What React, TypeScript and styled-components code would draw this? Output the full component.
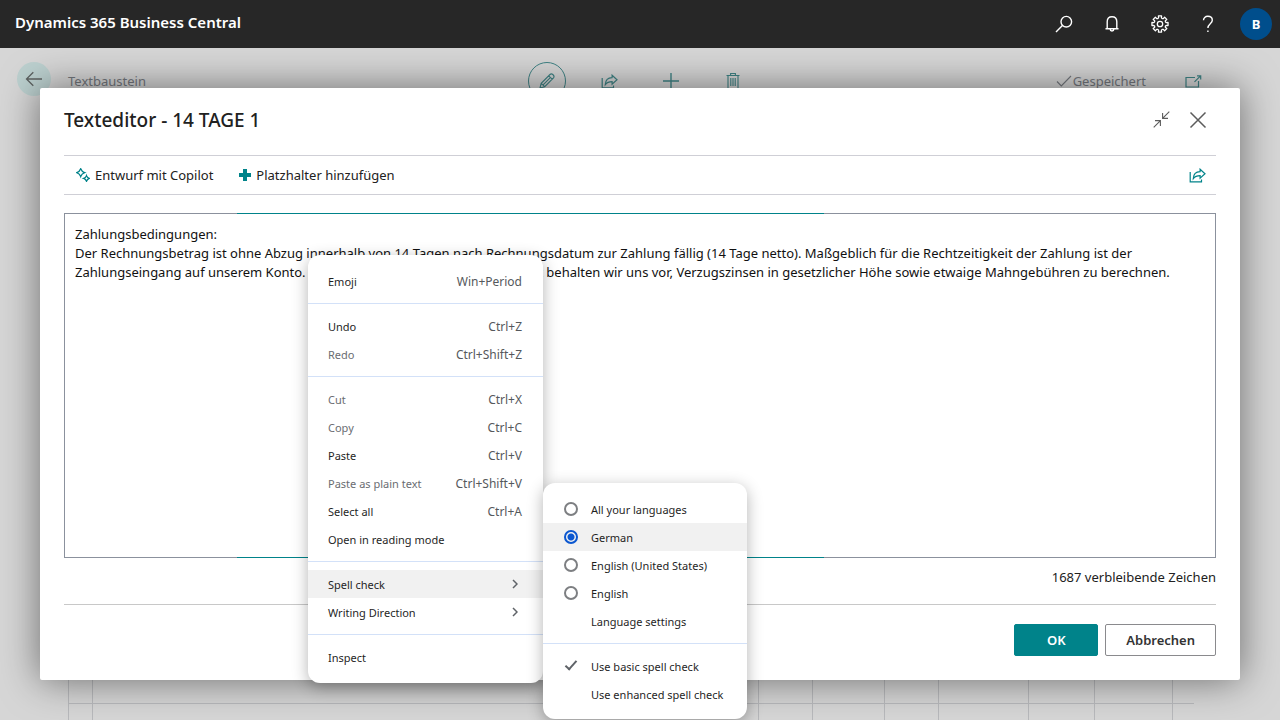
import React, { useState } from "react";
import styled, { createGlobalStyle } from "styled-components";

const teal = "#00838a";
const fadedTeal = "#3f8385";

const GlobalStyle = createGlobalStyle`
  *, *::before, *::after { box-sizing: border-box; }
  body {
    margin: 0;
    font-family: "Noto Sans", "Open Sans", sans-serif;
    font-size: 13px;
    color: #212121;
  }
  button {
    font: inherit;
    color: inherit;
    border: 0;
    padding: 0;
    background: none;
    cursor: pointer;
  }
  svg { display: block; fill: none; stroke: currentColor; }
`;

const Page = styled.div`
  position: relative;
  display: flex;
  flex-direction: column;
  min-height: 100vh;
  overflow: hidden;
  background: #d6d6d6;
`;

const TopBar = styled.header`
  display: flex;
  align-items: center;
  justify-content: space-between;
  height: 48px;
  padding: 0 8px 4px 15px;
  background: #272727;
  color: #fff;
`;

const Product = styled.a`
  color: #fff;
  font-size: 15px;
  line-height: 20px;
  font-weight: 600;
  text-decoration: none;
`;

const TopActions = styled.nav`
  display: flex;
  align-items: center;
  padding-top: 4px;
`;

const TopButton = styled.button`
  display: grid;
  place-items: center;
  width: 48px;
  height: 44px;
`;

const Avatar = styled.button`
  width: 32px;
  height: 32px;
  margin-left: 8px;
  border-radius: 50%;
  background: #004e8c;
  font-size: 13px;
  font-weight: 700;
`;

const RecordBar = styled.div`
  display: grid;
  grid-template-columns: 1fr auto 1fr;
  align-items: start;
  padding: 14px 17px 0;
  color: #74787e;
  line-height: 38px;
`;

const RecordStart = styled.div`
  display: flex;
  gap: 17px;
`;

const BackButton = styled.button`
  display: grid;
  place-items: center;
  width: 34px;
  height: 34px;
  border-radius: 50%;
  background: #bcd0cf;
  color: #5d6161;
`;

const RecordActions = styled.div`
  display: flex;
  gap: 24px;
`;

const RecordButton = styled.button<{ $ring?: boolean }>`
  display: grid;
  place-items: center;
  width: 38px;
  height: 38px;
  border-radius: 50%;
  border: ${(p) => (p.$ring ? `1px solid ${fadedTeal}` : "0")};
  color: ${fadedTeal};
`;

const RecordEnd = styled.div`
  display: flex;
  align-items: center;
  justify-content: flex-end;
  padding-right: 61px;
  gap: 39px;
`;

const SavedState = styled.span`
  display: flex;
  align-items: center;
  gap: 1px;
`;

const PopOut = styled.button`
  color: ${fadedTeal};
`;

const LineGrid = styled.div`
  display: grid;
  grid-template-columns: 24fr 666fr 54fr 72fr 54fr 90fr 66fr 78fr 22fr;
  grid-template-rows: 40px 17px;
  margin: auto 86px 0 68px;
`;

const LineCell = styled.div`
  border-left: 1px solid #b8b9bc;
  border-top: 1px solid #b8b9bc;
`;

const Overlay = styled.div`
  position: absolute;
  inset: 48px 0 0;
  display: flex;
  padding: 40px;
  overflow: hidden;
`;

const Dialog = styled.section`
  flex: 1;
  display: flex;
  flex-direction: column;
  min-width: 0;
  padding: 0 24px 24px;
  border-radius: 2px;
  background: #fff;
  box-shadow: 0 0 38px rgba(0, 0, 0, 0.5);
`;

const DialogHead = styled.div`
  display: flex;
  align-items: center;
  justify-content: space-between;
  height: 63px;
  margin-bottom: 4px;
`;

const Title = styled.h1`
  margin: 0;
  font-size: 19px;
  line-height: 28px;
  font-weight: 500;
`;

const WindowActions = styled.div`
  display: flex;
  align-items: center;
  gap: 19px;
  padding-right: 9px;
  color: #5c5c5c;
`;

const Toolbar = styled.div`
  display: flex;
  align-items: center;
  gap: 26px;
  padding: 0 10px 0 12px;
  height: 40px;
  border: solid #cfcfd6;
  border-width: 1px 0;
`;

const ToolButton = styled.button<{ $end?: boolean }>`
  display: flex;
  align-items: center;
  gap: 5px;
  margin-left: ${(p) => (p.$end ? "auto" : "0")};
  line-height: 38px;

  svg { color: ${teal}; }
`;

const Editor = styled.div`
  position: relative;
  flex: 1;
  display: flex;
  min-height: 160px;
  margin-top: 18px;

  &::before,
  &::after {
    content: "";
    position: absolute;
    left: 15%;
    width: 51%;
    height: 1px;
    background: ${teal};
  }
  &::before { top: 0; }
  &::after { bottom: 0; }
`;

const TextArea = styled.textarea`
  flex: 1;
  resize: none;
  padding: 11px 10px;
  border: 1px solid #8b919d;
  border-radius: 0;
  outline: 0;
  background: #fff;
  color: #111;
  font: inherit;
  line-height: 19px;
`;

const Counter = styled.div`
  padding-bottom: 8px;
  line-height: 38px;
  text-align: right;
`;

const DialogFoot = styled.div`
  display: flex;
  justify-content: flex-end;
  gap: 7px;
  padding-top: 19px;
  border-top: 1px solid #c8c8c8;
`;

const FootButton = styled.button<{ $primary?: boolean }>`
  min-width: 84px;
  height: 32px;
  padding: 0 20px;
  border: 1px solid ${(p) => (p.$primary ? teal : "#8a8a8d")};
  border-radius: 2px;
  background: ${(p) => (p.$primary ? teal : "#fff")};
  color: ${(p) => (p.$primary ? "#fff" : "#333")};
  font-weight: 600;
`;

const Menu = styled.div<{ $width: number; $sub?: boolean }>`
  position: absolute;
  left: ${(p) => (p.$sub ? "100%" : "308px")};
  top: ${(p) => (p.$sub ? "228px" : "207px")};
  width: ${(p) => p.$width}px;
  padding: ${(p) => (p.$sub ? "12px 0 11px" : "12px 0")};
  border-radius: 12px;
  background: #fff;
  box-shadow: 0 4px 16px rgba(0, 0, 0, 0.3);
  font-size: 11px;
  color: #1f1f1f;
`;

const MenuItem = styled.button<{ $active?: boolean }>`
  display: flex;
  align-items: center;
  justify-content: space-between;
  width: 100%;
  height: 28px;
  padding: 0 21px 0 20px;
  background: ${(p) => (p.$active ? "#f1f1f1" : "none")};

  &:disabled { color: #6a6d72; }
  svg { margin-right: 4px; color: #5f6368; }
`;

const Shortcut = styled.span`
  color: #55585c;
  font-size: 12px;
`;

const Separator = styled.hr`
  height: 1px;
  margin: 8px 0;
  border: 0;
  background: #d3e1f8;
`;

const Choice = styled.label<{ $active?: boolean }>`
  display: flex;
  align-items: center;
  gap: 13px;
  height: 28px;
  padding: 0 21px;
  background: ${(p) => (p.$active ? "#f1f1f1" : "none")};
`;

const Tick = styled.input`
  appearance: none;
  display: grid;
  place-items: center;
  width: 14px;
  height: 14px;
  margin: 0;

  &[type="radio"] {
    border: 2px solid #7d7f82;
    border-radius: 50%;
  }
  &[type="radio"]:checked {
    border-color: #0b57d0;
    background: radial-gradient(circle, #0b57d0 3px, transparent 4px);
  }
  &[type="checkbox"]:checked::before {
    content: "";
    width: 12px;
    height: 6px;
    border: solid #5f6368;
    border-width: 0 0 2px 2px;
    transform: translateY(-2px) rotate(-48deg);
  }
`;

const SubAction = styled(MenuItem)`
  padding: 0 20px 0 48px;
`;

const SearchIcon = () => (
  <svg width="18" height="18" viewBox="0 0 18 18" strokeWidth="1.4">
    <circle cx="11.3" cy="6.7" r="5.3" />
    <path d="M7.4 10.6 1 17" />
  </svg>
);
const BellIcon = () => (
  <svg width="16" height="18" viewBox="0 0 16 18" strokeWidth="1.4">
    <path d="M1.5 13.7h13M3.2 13.7V6.8C3.2 3.8 5.2 1.8 8 1.8s4.8 2 4.8 5v6.9M6.2 14.2c0 2.3 3.6 2.3 3.6 0" />
  </svg>
);
const gearPath = Array.from({ length: 8 }, (_, i) => {
  const point = (deg: number, r: number) => {
    const a = ((i * 45 + deg) * Math.PI) / 180;
    return `${(9 + r * Math.sin(a)).toFixed(2)} ${(9 - r * Math.cos(a)).toFixed(2)}`;
  };
  return `${i ? "L" : "M"}${point(-13, 6.3)}L${point(-11, 8.2)}L${point(11, 8.2)}L${point(13, 6.3)}L${point(22.5, 5.8)}`;
}).join("");
const GearIcon = () => (
  <svg width="18" height="18" viewBox="0 0 18 18" strokeWidth="1.3">
    <path d={gearPath + "Z"} strokeLinejoin="round" />
    <circle cx="9" cy="9" r="2.7" />
  </svg>
);
const HelpIcon = () => (
  <svg width="12" height="18" viewBox="0 0 12 18" strokeWidth="1.4">
    <path d="M1.5 5.3C1.5 2.9 3.3 1.3 5.8 1.3s4.5 1.5 4.5 3.9c0 3.3-4.4 3.7-4.4 7.7M5.9 15.4v1.7" />
  </svg>
);
const BackIcon = () => (
  <svg width="18" height="16" viewBox="0 0 18 16" strokeWidth="1.3">
    <path d="M17 8H1.5M8.3 1.2 1.5 8l6.8 6.8" />
  </svg>
);
const PencilIcon = () => (
  <svg width="18" height="18" viewBox="0 0 18 18" strokeWidth="1.1">
    <path d="m2 16 1.2-4.7L12 2.5c1.8-1.8 5.2 1.4 3.5 3.3l-8.8 8.9L2 16ZM3.2 11.3l3.5 3.4M10.7 3.8l3.5 3.4M12.3 5.6l-7.5 7.6" />
  </svg>
);
const ShareIcon = () => (
  <svg width="17" height="15" viewBox="0 0 17 15" strokeWidth="1.2">
    <path d="M1.2 4v9.8h11.3v-2.3" />
    <path d="M4.3 10.6c.2-4.7 2.7-7 6.8-7V1.2l4.9 4.5-4.9 4.5V7.6c-3 0-5.2.8-6.8 3Z" />
  </svg>
);
const AddIcon = () => (
  <svg width="16" height="16" viewBox="0 0 16 16" strokeWidth="1.4">
    <path d="M8 0v16M0 8h16" />
  </svg>
);
const TrashIcon = () => (
  <svg width="14" height="16" viewBox="0 0 14 16" strokeWidth="1.1">
    <path d="M.5 2.5h13M4.6 2.5v-2h4.8v2M2 2.5v13h10v-13M4.8 5v8M7 5v8M9.2 5v8" />
  </svg>
);
const SavedIcon = () => (
  <svg width="16" height="12" viewBox="0 0 16 12" strokeWidth="1.1">
    <path d="m1 6.5 4.3 4.5L15 1" />
  </svg>
);
const PopOutIcon = () => (
  <svg width="17" height="13" viewBox="0 0 17 13" strokeWidth="1.2">
    <path d="M10 2.5H1v9.5h12.5V6M9.5 6.8l6-6M12 .8h3.7v3.7" />
  </svg>
);
const CollapseIcon = () => (
  <svg width="17" height="17" viewBox="0 0 17 17" strokeWidth="1.1">
    <path d="M16.3.7 9.8 7.2M9.6 2v5.4H15M.7 16.3l6.5-6.5M2 9.6h5.4V15" />
  </svg>
);
const CloseIcon = () => (
  <svg width="18" height="18" viewBox="0 0 18 18" strokeWidth="1.5">
    <path d="m1.5 1.5 15 15M16.5 1.5l-15 15" />
  </svg>
);
const CopilotIcon = () => (
  <svg width="14" height="14" viewBox="0 0 14 14" strokeWidth="1.3">
    <path d="M4.7.8C5.4 2.7 6.6 3.9 8.6 4.6 6.6 5.3 5.4 6.5 4.7 8.5 4 6.5 2.8 5.3.8 4.6 2.8 3.9 4 2.7 4.7.8ZM10.5 7.6c.5 1.5 1.3 2.3 2.8 2.8-1.5.5-2.3 1.3-2.8 2.8-.5-1.5-1.3-2.3-2.8-2.8 1.5-.5 2.3-1.3 2.8-2.8Z" />
  </svg>
);
const PlusIcon = () => (
  <svg width="12" height="12" viewBox="0 0 12 12" strokeWidth="4">
    <path d="M6 0v12M0 6h12" />
  </svg>
);
const ChevronIcon = () => (
  <svg width="6" height="10" viewBox="0 0 6 10" strokeWidth="1.5">
    <path d="m1 1 4 4-4 4" />
  </svg>
);

const initialText =
  "Zahlungsbedingungen:\nDer Rechnungsbetrag ist ohne Abzug innerhalb von 14 Tagen nach Rechnungsdatum zur Zahlung fällig (14 Tage netto). Maßgeblich für die Rechtzeitigkeit der Zahlung ist der Zahlungseingang auf unserem Konto. Bei Überschreiten dieser Zahlungsfrist behalten wir uns vor, Verzugszinsen in gesetzlicher Höhe sowie etwaige Mahngebühren zu berechnen.";

interface Entry {
  label: string;
  keys?: string;
  disabled?: boolean;
  submenu?: boolean;
  active?: boolean;
}

const menuGroups: Entry[][] = [
  [{ label: "Emoji", keys: "Win+Period" }],
  [
    { label: "Undo", keys: "Ctrl+Z" },
    { label: "Redo", keys: "Ctrl+Shift+Z", disabled: true },
  ],
  [
    { label: "Cut", keys: "Ctrl+X", disabled: true },
    { label: "Copy", keys: "Ctrl+C", disabled: true },
    { label: "Paste", keys: "Ctrl+V" },
    { label: "Paste as plain text", keys: "Ctrl+Shift+V", disabled: true },
    { label: "Select all", keys: "Ctrl+A" },
    { label: "Open in reading mode" },
  ],
  [
    { label: "Spell check", submenu: true, active: true },
    { label: "Writing Direction", submenu: true },
  ],
  [{ label: "Inspect" }],
];

const languages = ["All your languages", "German", "English (United States)", "English"];

export default function App() {
  const [text, setText] = useState(initialText);
  const [language, setLanguage] = useState("German");
  const [basic, setBasic] = useState(true);

  return (
    <Page>
      <GlobalStyle />
      <TopBar>
        <Product href="#">Dynamics 365 Business Central</Product>
        <TopActions>
          <TopButton aria-label="Suchen"><SearchIcon /></TopButton>
          <TopButton aria-label="Benachrichtigungen"><BellIcon /></TopButton>
          <TopButton aria-label="Einstellungen"><GearIcon /></TopButton>
          <TopButton aria-label="Hilfe"><HelpIcon /></TopButton>
          <Avatar>B</Avatar>
        </TopActions>
      </TopBar>

      <RecordBar>
        <RecordStart>
          <BackButton aria-label="Zurück"><BackIcon /></BackButton>
          <span>Textbaustein</span>
        </RecordStart>
        <RecordActions>
          <RecordButton $ring aria-label="Bearbeiten"><PencilIcon /></RecordButton>
          <RecordButton aria-label="Teilen"><ShareIcon /></RecordButton>
          <RecordButton aria-label="Neu"><AddIcon /></RecordButton>
          <RecordButton aria-label="Löschen"><TrashIcon /></RecordButton>
        </RecordActions>
        <RecordEnd>
          <SavedState><SavedIcon />Gespeichert</SavedState>
          <PopOut aria-label="In neuem Fenster öffnen"><PopOutIcon /></PopOut>
        </RecordEnd>
      </RecordBar>

      <LineGrid>
        {Array.from({ length: 18 }, (_, i) => <LineCell key={i} />)}
      </LineGrid>

      <Overlay>
        <Dialog role="dialog" aria-labelledby="dialog-title">
          <DialogHead>
            <Title id="dialog-title">Texteditor - 14 TAGE 1</Title>
            <WindowActions>
              <button aria-label="Verkleinern"><CollapseIcon /></button>
              <button aria-label="Schließen"><CloseIcon /></button>
            </WindowActions>
          </DialogHead>
          <Toolbar>
            <ToolButton><CopilotIcon />Entwurf mit Copilot</ToolButton>
            <ToolButton><PlusIcon />Platzhalter hinzufügen</ToolButton>
            <ToolButton $end aria-label="Teilen"><ShareIcon /></ToolButton>
          </Toolbar>
          <Editor>
            <TextArea
              aria-label="Text"
              spellCheck={false}
              value={text}
              onChange={(e) => setText(e.target.value)}
            />
          </Editor>
          <Counter>1687 verbleibende Zeichen</Counter>
          <DialogFoot>
            <FootButton $primary>OK</FootButton>
            <FootButton>Abbrechen</FootButton>
          </DialogFoot>
        </Dialog>

        <Menu role="menu" $width={235}>
          {menuGroups.map((group, g) => (
            <React.Fragment key={g}>
              {g > 0 && <Separator />}
              {group.map((item) => (
                <MenuItem key={item.label} role="menuitem" disabled={item.disabled} $active={item.active}>
                  {item.label}
                  {item.keys && <Shortcut>{item.keys}</Shortcut>}
                  {item.submenu && <ChevronIcon />}
                </MenuItem>
              ))}
            </React.Fragment>
          ))}
          <Menu role="menu" $width={204} $sub>
            {languages.map((name) => (
              <Choice key={name} $active={name === language}>
                <Tick
                  type="radio"
                  name="language"
                  checked={name === language}
                  onChange={() => setLanguage(name)}
                />
                {name}
              </Choice>
            ))}
            <SubAction role="menuitem">Language settings</SubAction>
            <Separator />
            <Choice>
              <Tick type="checkbox" checked={basic} onChange={() => setBasic(true)} />
              Use basic spell check
            </Choice>
            <Choice>
              <Tick type="checkbox" checked={!basic} onChange={() => setBasic(false)} />
              Use enhanced spell check
            </Choice>
          </Menu>
        </Menu>
      </Overlay>
    </Page>
  );
}
